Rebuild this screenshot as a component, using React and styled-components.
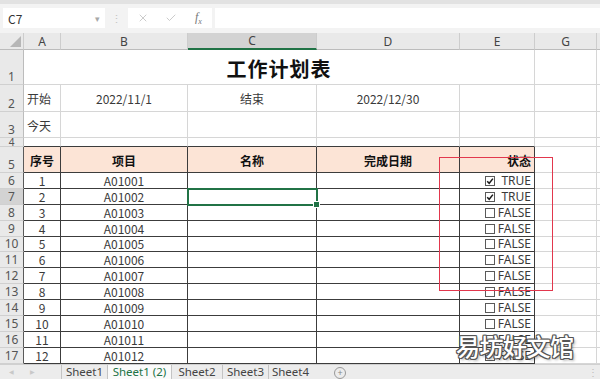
import React from 'react';
import styled, { createGlobalStyle } from 'styled-components';
import { X, Check } from 'lucide-react';

const GRID = '#d6d6d6';
const LINE = '#3c3c3c';
const GREEN = '#217346';
const PEACH = '#fce4d6';

const GlobalStyle = createGlobalStyle`
    html, body {
        margin: 0;
        padding: 0;
        background: #ffffff;
        overflow: hidden;
    }
    body {
        font-family: "Noto Sans CJK SC", "Noto Sans", sans-serif;
        color: #333;
    }
`;

const Page = styled.div`
    width: 600px;
    height: 379px;
    position: relative;
    display: flex;
    flex-direction: column;
    overflow: hidden;
    background: #fff;
`;

const TopBar = styled.div`
    height: 33px;
    box-sizing: border-box;
    background: #f3f3f3;
    border-top: 4px solid #e2e2e2;
    padding: 4px 0 0 3px;
    display: flex;
    align-items: flex-start;
`;

const NameBox = styled.div`
    width: 102px;
    height: 20px;
    box-sizing: border-box;
    background: #fff;
    padding: 0 5px 0 5px;
    display: flex;
    align-items: center;
    justify-content: space-between;
    font-size: 12px;
    color: #333;
`;

const Caret = styled.span`
    font-size: 9px;
    color: #a8a8a8;
`;

const Dots = styled.div`
    width: 23px;
    height: 20px;
    display: flex;
    align-items: center;
    justify-content: center;
    color: #c4c4c4;
    font-size: 11px;
`;

const ActionBox = styled.div`
    width: 84px;
    height: 20px;
    background: #fff;
    display: flex;
    align-items: center;
    padding-left: 9px;
    box-sizing: border-box;
    gap: 16px;
    color: #b9b9b9;
`;

const Fx = styled.span`
    font-family: "Liberation Serif", serif;
    font-style: italic;
    font-size: 12px;
    color: #777;
    margin-left: 2px;
    sub {
        font-size: 8px;
    }
`;

const FormulaInput = styled.div`
    flex: 1;
    height: 20px;
    margin-left: 3px;
    background: #fff;
`;

const Sheet = styled.div`
    position: relative;
    display: grid;
    grid-template-columns: 24px 37px 127px 129px 143px 75px 62px 1fr;
    grid-template-rows: 17px 35px 27px 26px 9px 26px repeat(12, 15.9px);
    font-size: 12px;
`;

const ColHead = styled.div`
    box-sizing: border-box;
    background: ${p => (p.$selected ? '#d3d3d3' : '#e9e9e9')};
    border-right: 1px solid #cdcdcd;
    border-bottom: ${p => (p.$selected ? `2px solid ${GREEN}` : '1px solid #bcbcbc')};
    display: flex;
    align-items: center;
    justify-content: center;
    color: #444;
    font-size: 12px;
    font-family: "Noto Sans", sans-serif;
`;

const Corner = styled(ColHead)`
    align-items: flex-end;
    justify-content: flex-end;
    padding: 0 2px 2px 0;
`;

const Triangle = styled.div`
    width: 0;
    height: 0;
    border-left: 11px solid transparent;
    border-bottom: 11px solid #b6b6b6;
`;

const RowHead = styled.div`
    box-sizing: border-box;
    background: ${p => (p.$selected ? '#d3d3d3' : '#e9e9e9')};
    border-right: 1px solid ${p => (p.$dark ? '#5a5a5a' : '#bcbcbc')};
    border-bottom: 1px solid #d0d0d0;
    display: flex;
    align-items: flex-end;
    justify-content: center;
    color: #555;
    font-size: ${p => (p.$tiny ? 10 : 12)}px;
    line-height: ${p => (p.$tiny ? 8 : 14)}px;
    overflow: hidden;
    font-family: "Noto Sans", sans-serif;
`;

const Cell = styled.div`
    position: relative;
    box-sizing: border-box;
    grid-column: ${p => p.$span || 'auto'};
    background: ${p => p.$bg || '#fff'};
    border-right: 1px solid ${p => p.$rb || GRID};
    border-bottom: 1px solid ${p => p.$bb || GRID};
    display: flex;
    align-items: ${p => p.$valign || 'flex-end'};
    justify-content: ${p => p.$align || 'flex-start'};
    padding: 0 3px ${p => p.$pb ?? 0}px 3px;
    font-weight: ${p => (p.$bold ? 700 : 400)};
    color: ${p => (p.$bold ? '#111' : '#3a3a3a')};
    white-space: nowrap;
    line-height: 15px;
    overflow: visible;
    ${p =>
        p.$selected &&
        `
        outline: 2px solid ${GREEN};
        outline-offset: -1px;
        z-index: 2;
    `}
`;

const Title = styled.span`
    font-size: 20px;
    font-weight: 700;
    color: #111;
    line-height: 24px;
    letter-spacing: 1px;
`;

const FillHandle = styled.span`
    position: absolute;
    right: -4px;
    bottom: -4px;
    width: 5px;
    height: 5px;
    background: ${GREEN};
    border: 1px solid #fff;
`;

const StatusCell = styled(Cell)`
    padding-left: 25px;
`;

const Box = styled.svg`
    flex: none;
    margin-bottom: 2px;
`;

const StatusText = styled.span`
    margin-left: auto;
    font-family: "Noto Sans", sans-serif;
    font-size: 12px;
    color: #3a3a3a;
`;

const RedFrame = styled.div`
    position: absolute;
    left: 439px;
    top: 124px;
    width: 114px;
    height: 134px;
    border: 1.5px solid #e2374d;
    box-sizing: border-box;
    z-index: 3;
    pointer-events: none;
`;

const Watermark = styled.div`
    position: absolute;
    left: 456px;
    top: 328px;
    font-size: 24px;
    font-weight: 500;
    letter-spacing: -0.5px;
    color: #fff;
    z-index: 5;
    text-shadow: 1px 1px 0 #555, -1px -1px 0 #555, 1px -1px 0 #555, -1px 1px 0 #555,
        0 1px 0 #555, 0 -1px 0 #555, 1px 0 0 #555, -1px 0 0 #555, 2px 2px 3px rgba(0, 0, 0, 0.35);
`;

const TabBar = styled.div`
    flex: 1;
    background: #ececec;
    border-top: 1px solid #d0d0d0;
    display: flex;
    align-items: stretch;
    font-size: 11.5px;
    font-family: "Noto Sans", sans-serif;
    color: #444;
`;

const TabNav = styled.div`
    width: 61px;
    display: flex;
    align-items: center;
    gap: 16px;
    padding-left: 9px;
    box-sizing: border-box;
    color: #c8c8c8;
    font-size: 6px;
`;

const Tab = styled.div`
    width: ${p => p.$w}px;
    box-sizing: border-box;
    border-left: 1px solid #c4c4c4;
    display: flex;
    align-items: center;
    justify-content: center;
    line-height: 13px;
    background: ${p => (p.$active ? '#fafafa' : 'transparent')};
    color: ${p => (p.$active ? GREEN : '#444')};
`;

const AddSheet = styled.div`
    width: 10px;
    height: 10px;
    margin: 2px 0 0 22px;
    border: 1px solid #999;
    border-radius: 50%;
    display: flex;
    align-items: center;
    justify-content: center;
    color: #888;
    font-size: 9px;
    line-height: 9px;
`;

const Grip = styled.div`
    margin-left: auto;
    width: 14px;
    display: flex;
    align-items: center;
    justify-content: center;
    color: #bbb;
    font-size: 10px;
`;

const cols = ['A', 'B', 'C', 'D', 'E', 'G', ''];

const data = Array.from({ length: 12 }, (_, i) => ({
    no: i + 1,
    code: `A0${1001 + i}`,
    done: i < 2,
}));

const CheckBox = ({ checked }) => (
    <Box width="10" height="10" viewBox="0 0 10 10">
        <rect x="0.5" y="0.5" width="9" height="9" fill="#fff" stroke="#5a5a5a" strokeWidth="1" />
        {checked && <path d="M2.2 5.2 L4.2 7.3 L7.9 2.6" fill="none" stroke="#1a1a1a" strokeWidth="1.5" />}
    </Box>
);

const ExtraCells = () => (
    <>
        <Cell />
        <Cell />
    </>
);

const App = () => {
    return (
        <Page>
            <GlobalStyle />
            <TopBar>
                <NameBox>
                    C7
                    <Caret>▾</Caret>
                </NameBox>
                <Dots>⋮</Dots>
                <ActionBox>
                    <X size={12} strokeWidth={1.5} />
                    <Check size={12} strokeWidth={1.5} />
                    <Fx>
                        f<sub>x</sub>
                    </Fx>
                </ActionBox>
                <FormulaInput />
            </TopBar>

            <Sheet>
                <Corner>
                    <Triangle />
                </Corner>
                {cols.map(c => (
                    <ColHead key={c || 'h'} $selected={c === 'C'}>
                        {c}
                    </ColHead>
                ))}

                <RowHead>1</RowHead>
                <Cell $span="2 / 7" $align="center" $pb={3}>
                    <Title>工作计划表</Title>
                </Cell>
                <ExtraCells />

                <RowHead>2</RowHead>
                <Cell $pb={5}>开始</Cell>
                <Cell $align="center" $pb={5}>2022/11/1</Cell>
                <Cell $align="center" $pb={5}>结束</Cell>
                <Cell $align="center" $pb={5}>2022/12/30</Cell>
                <Cell />
                <ExtraCells />

                <RowHead>3</RowHead>
                <Cell $pb={4}>今天</Cell>
                <Cell />
                <Cell />
                <Cell />
                <Cell />
                <ExtraCells />

                <RowHead $tiny>4</RowHead>
                {[0, 1, 2, 3, 4].map(i => (
                    <Cell key={i} $bb={LINE} />
                ))}
                <ExtraCells />

                <RowHead $dark>5</RowHead>
                <Cell $bg={PEACH} $rb={LINE} $bb={LINE} $bold $align="center" $pb={4}>序号</Cell>
                <Cell $bg={PEACH} $rb={LINE} $bb={LINE} $bold $align="center" $pb={4}>项目</Cell>
                <Cell $bg={PEACH} $rb={LINE} $bb={LINE} $bold $align="center" $pb={4}>名称</Cell>
                <Cell $bg={PEACH} $rb={LINE} $bb={LINE} $bold $align="center" $pb={4}>完成日期</Cell>
                <Cell $bg={PEACH} $rb={LINE} $bb={LINE} $bold $align="flex-end" $pb={4}>状态</Cell>
                <ExtraCells />

                {data.map(row => (
                    <React.Fragment key={row.no}>
                        <RowHead $dark $selected={row.no === 2}>{row.no + 5}</RowHead>
                        <Cell $rb={LINE} $bb={LINE} $align="center">{row.no}</Cell>
                        <Cell $rb={LINE} $bb={LINE} $align="center">{row.code}</Cell>
                        <Cell $rb={LINE} $bb={LINE} $selected={row.no === 2}>
                            {row.no === 2 && <FillHandle />}
                        </Cell>
                        <Cell $rb={LINE} $bb={LINE} />
                        <StatusCell $rb={LINE} $bb={LINE}>
                            <CheckBox checked={row.done} />
                            <StatusText>{row.done ? 'TRUE' : 'FALSE'}</StatusText>
                        </StatusCell>
                        <ExtraCells />
                    </React.Fragment>
                ))}

                <RedFrame />
            </Sheet>

            <TabBar>
                <TabNav>
                    <span>◀</span>
                    <span>▶</span>
                </TabNav>
                <Tab $w={46}>Sheet1</Tab>
                <Tab $w={64} $active>Sheet1 (2)</Tab>
                <Tab $w={51}>Sheet2</Tab>
                <Tab $w={46}>Sheet3</Tab>
                <Tab $w={44}>Sheet4</Tab>
                <AddSheet>+</AddSheet>
                <Grip>⋮</Grip>
            </TabBar>

            <Watermark>易坊好文馆</Watermark>
        </Page>
    );
};

export default App;
